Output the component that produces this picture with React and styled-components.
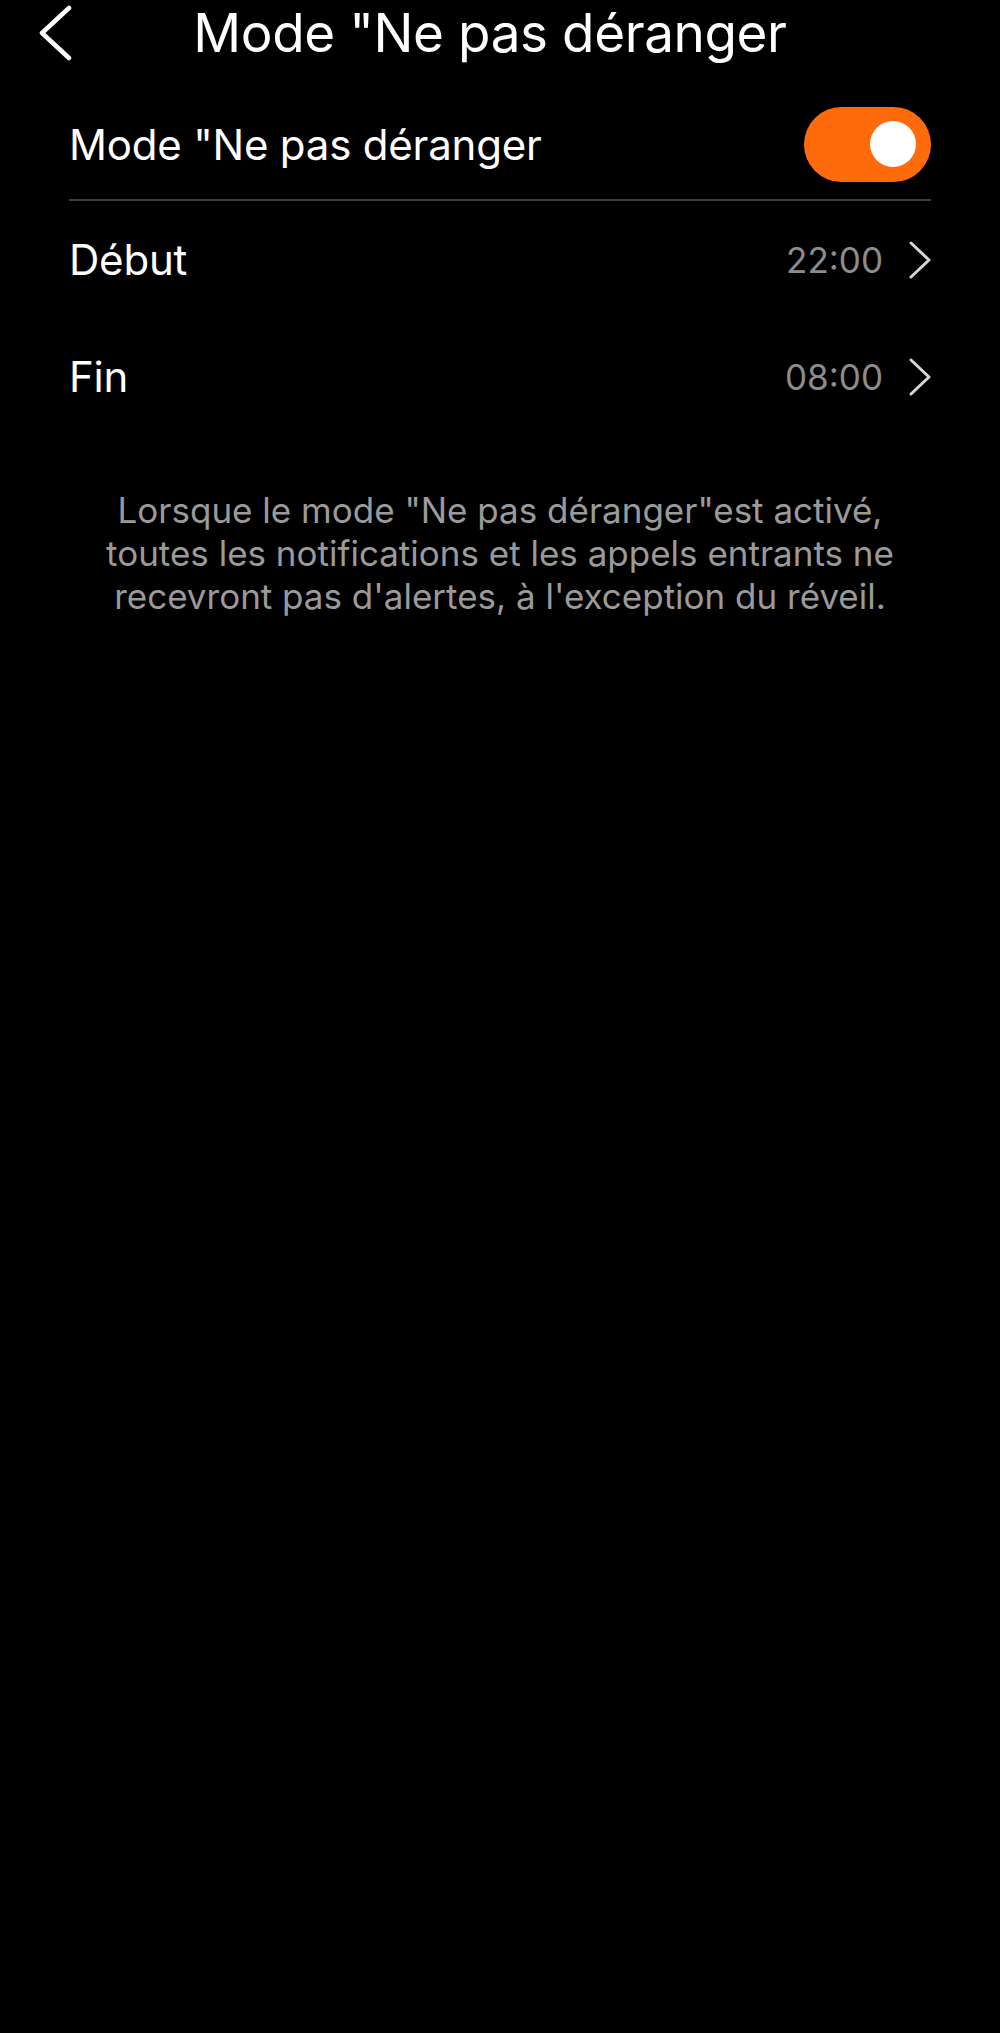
import React, { useState } from 'react';
import styled, { createGlobalStyle } from 'styled-components';

const GlobalStyle = createGlobalStyle`
  html, body {
    margin: 0;
    padding: 0;
    background: #000;
  }
  body {
    font-family: Inter, "Noto Sans", "Liberation Sans", sans-serif;
    color: #fff;
    -webkit-font-smoothing: antialiased;
  }
`;

const Screen = styled.div`
  min-height: 2033px;
  background: #000;
`;

const Header = styled.header`
  display: grid;
  grid-template-columns: 80px 1fr 100px;
  align-items: start;
  height: 90px;
`;

const BackButton = styled.button`
  display: flex;
  background: none;
  border: 0;
  padding: 5px 0 0 36px;
  cursor: pointer;
`;

const Title = styled.h1`
  margin: 7px 0 0;
  text-align: center;
  font-size: 53px;
  line-height: 53px;
  font-weight: 400;
  letter-spacing: -0.4px;
  color: #fff;
  white-space: nowrap;
`;

const Section = styled.section`
  padding: 0 69px;
`;

const Row = styled.div`
  display: flex;
  align-items: center;
  justify-content: space-between;
  height: ${(p) => p.$height || 117}px;
  border-bottom: ${(p) => (p.$divider ? '2px solid #3d3d3d' : 'none')};
`;

const Label = styled.span`
  font-size: 42px;
  font-weight: 400;
  letter-spacing: -0.2px;
  color: #fff;
`;

const Value = styled.span`
  display: flex;
  align-items: center;
  gap: 24px;
  font-size: 35px;
  color: #8c8c8c;
`;

const Toggle = styled.button`
  position: relative;
  width: 127px;
  height: 75px;
  border: 0;
  padding: 0;
  border-radius: 38px;
  background: ${(p) => (p.$on ? '#ff6b0a' : '#3a3a3c')};
  cursor: pointer;
`;

const Knob = styled.span`
  position: absolute;
  top: 14px;
  left: ${(p) => (p.$on ? '66px' : '16px')};
  width: 46px;
  height: 46px;
  border-radius: 50%;
  background: #fff;
`;

const Note = styled.p`
  margin: 54px 0 0;
  padding: 0 100px;
  text-align: center;
  font-size: 35px;
  line-height: 43px;
  color: #9a9a9a;
`;

const BackIcon = () => (
  <svg width="38" height="56" viewBox="0 0 38 56" fill="none">
    <path d="M33 3 L6 28 L33 53" stroke="#fff" strokeWidth="4.5" strokeLinecap="round" strokeLinejoin="round" />
  </svg>
);

const Chevron = () => (
  <svg width="24" height="38" viewBox="0 0 24 38" fill="none">
    <path d="M4 2 L22 19 L4 36" stroke="#d6d6d6" strokeWidth="3" strokeLinecap="round" strokeLinejoin="round" />
  </svg>
);

export default function App() {
  const [on, setOn] = useState(true);

  return (
    <Screen>
      <GlobalStyle />
      <Header>
        <BackButton aria-label="back">
          <BackIcon />
        </BackButton>
        <Title>Mode "Ne pas déranger</Title>
        <span />
      </Header>
      <Section>
        <Row $height={109} $divider>
          <Label>Mode "Ne pas déranger</Label>
          <Toggle $on={on} onClick={() => setOn(!on)} aria-label="toggle">
            <Knob $on={on} />
          </Toggle>
        </Row>
        <Row>
          <Label>Début</Label>
          <Value>
            22:00
            <Chevron />
          </Value>
        </Row>
        <Row>
          <Label>Fin</Label>
          <Value>
            08:00
            <Chevron />
          </Value>
        </Row>
      </Section>
      <Note>
        Lorsque le mode "Ne pas déranger"est activé, toutes les notifications et les appels entrants ne recevront pas d'alertes, à l'exception du réveil.
      </Note>
    </Screen>
  );
}
